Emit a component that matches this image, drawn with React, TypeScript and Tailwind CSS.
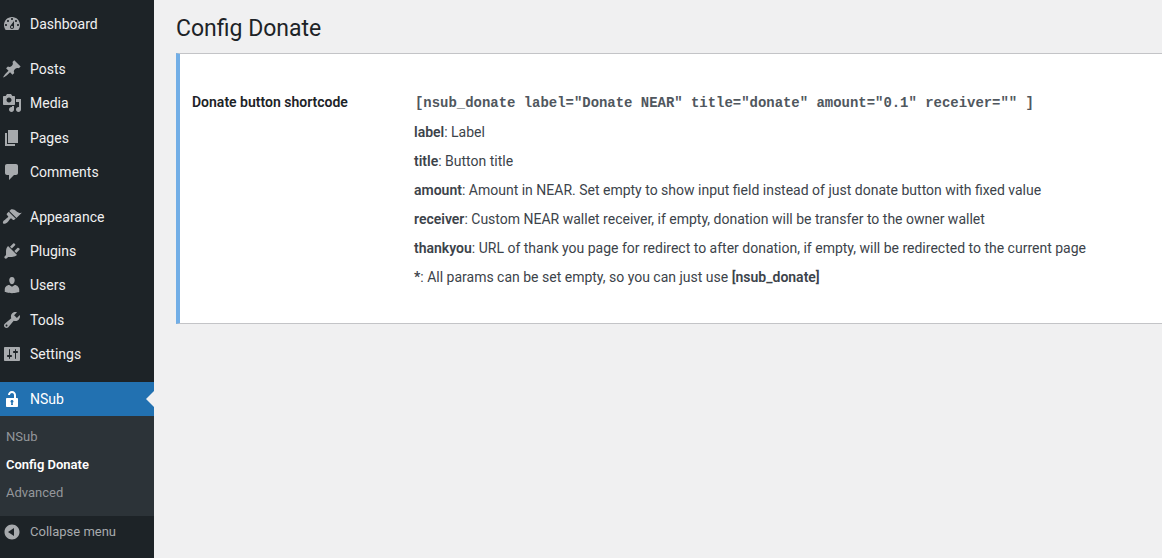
const icons: Record<string, string> = {
  dashboard:
    "M3.76 16h12.48c1.1-1.37 1.76-3.11 1.76-5 0-4.42-3.58-8-8-8s-8 3.58-8 8c0 1.89.66 3.63 1.76 5zM10 4c.55 0 1 .45 1 1s-.45 1-1 1-1-.45-1-1 .45-1 1-1zM6 6c.55 0 1 .45 1 1s-.45 1-1 1-1-.45-1-1 .45-1 1-1zm8 0c.55 0 1 .45 1 1s-.45 1-1 1-1-.45-1-1 .45-1 1-1zm-5.37 5.55L12 7v6c0 1.1-.9 2-2 2s-2-.9-2-2c0-.57.24-1.08.63-1.45zM4 10c.55 0 1 .45 1 1s-.45 1-1 1-1-.45-1-1 .45-1 1-1zm12 0c.55 0 1 .45 1 1s-.45 1-1 1-1-.45-1-1 .45-1 1-1zm-5 3c0-.55-.45-1-1-1s-1 .45-1 1 .45 1 1 1 1-.45 1-1z",
  posts:
    "M10.44 3.02l1.82-1.82 6.36 6.35-1.83 1.82c-1.05-.68-2.48-.57-3.41.36l-.75.75c-.92.93-1.04 2.35-.35 3.41l-1.83 1.82-2.41-2.41-2.8 2.79c-.42.42-3.38 2.71-3.8 2.29s1.86-3.39 2.28-3.81l2.79-2.79L4.1 9.36l1.83-1.82c1.05.69 2.48.57 3.4-.36l.75-.75c.93-.92 1.05-2.35.36-3.41z",
  media:
    "M13 11V4c0-.55-.45-1-1-1h-1.67L9 1H5L3.67 3H2c-.55 0-1 .45-1 1v7c0 .55.45 1 1 1h10c.55 0 1-.45 1-1zM7 4.5c1.38 0 2.5 1.12 2.5 2.5S8.38 9.5 7 9.5 4.5 8.38 4.5 7 5.62 4.5 7 4.5zM14 6h5v10.5c0 1.38-1.12 2.5-2.5 2.5S14 17.88 14 16.5s1.12-2.5 2.5-2.5c.17 0 .34.02.5.05V9h-3V6zm-4 8.05V13h2v3.5c0 1.38-1.12 2.5-2.5 2.5S7 17.88 7 16.5 8.12 14 9.5 14c.17 0 .34.02.5.05z",
  pages: "M6 15V2h10v13H6zm-1 1h8v2H3V5h2v11z",
  comments: "M5 2h9c1.1 0 2 .9 2 2v7c0 1.1-.9 2-2 2h-2l-5 5v-5H5c-1.1 0-2-.9-2-2V4c0-1.1.9-2 2-2z",
  appearance:
    "M14.48 11.06L7.41 3.99l1.5-1.5c.5-.56 2.3-.47 3.51.32 1.21.8 1.43 1.28 2.91 2.1 1.18.64 2.45 1.26 4.45.85zm-.71.71L6.7 4.7 4.93 6.47c-.39.39-.39 1.02 0 1.41l1.06 1.06c.39.39.39 1.03 0 1.42-.6.6-1.43 1.11-2.21 1.69-.35.26-.7.53-1.01.84C1.43 13.23.28 15.5 1.2 16.44c.97.97 3.21-.19 4.55-1.55.3-.3.57-.66.84-1.01.58-.78 1.09-1.61 1.69-2.21.39-.39 1.02-.39 1.41 0l1.06 1.06c.39.39 1.02.39 1.41 0z",
  plugins:
    "M13.11 4.36L9.87 7.6 8 5.73l3.24-3.24c.35-.34 1.05-.2 1.56.32.52.51.66 1.21.31 1.55zm-8 1.77l.91-1.12 9.01 9.01-1.19.84c-.71.71-2.63 1.16-3.82 1.16H6.14L4.9 17.26c-.59.59-1.54.59-2.12 0-.59-.58-.59-1.53 0-2.12l1.24-1.24v-3.88c0-1.13.4-3.19 1.09-3.89zm7.26 3.97l3.24-3.24c.34-.35 1.04-.21 1.55.31.52.51.66 1.21.31 1.55l-3.24 3.25z",
  users:
    "M10 9.25c-2.27 0-2.73-3.44-2.73-3.44C7 4.02 7.82 2 9.97 2c2.16 0 2.98 2.02 2.71 3.81 0 0-.41 3.44-2.68 3.44zm0 2.57L12.72 10c2.39 0 4.52 2.33 4.52 4.53v2.49s-3.65 1.13-7.24 1.13c-3.65 0-7.24-1.13-7.24-1.13v-2.49c0-2.25 1.94-4.48 4.47-4.48z",
  tools:
    "M16.68 9.77c-1.34 1.34-3.3 1.67-4.95.99l-5.41 6.52c-.99.99-2.59.99-3.58 0s-.99-2.59 0-3.57l6.52-5.42c-.68-1.65-.35-3.61.99-4.95 1.28-1.28 3.12-1.62 4.72-1.06l-2.89 2.89 2.82 2.82 2.86-2.87c.53 1.58.18 3.39-1.08 4.65zM3.81 16.21c.4.39 1.04.39 1.43 0 .4-.4.4-1.04 0-1.43-.39-.4-1.03-.4-1.43 0-.39.39-.39 1.03 0 1.43z",
  settings:
    "M18 16V4c0-.55-.45-1-1-1H3c-.55 0-1 .45-1 1v12c0 .55.45 1 1 1h14c.55 0 1-.45 1-1zM8 11h1c.55 0 1 .45 1 1s-.45 1-1 1H8v1.5c0 .28-.22.5-.5.5s-.5-.22-.5-.5V13H6c-.55 0-1-.45-1-1s.45-1 1-1h1V5.5c0-.28.22-.5.5-.5s.5.22.5.5V11zm5-2h-1c-.55 0-1-.45-1-1s.45-1 1-1h1V5.5c0-.28.22-.5.5-.5s.5.22.5.5V7h1c.55 0 1 .45 1 1s-.45 1-1 1h-1v5.5c0 .28-.22.5-.5.5s-.5-.22-.5-.5V9z",
  unlock:
    "M12 9V6c0-1.1-.9-2-2-2s-2 .9-2 2H6c0-2.21 1.79-4 4-4s4 1.79 4 4v3h1c.55 0 1 .45 1 1v7c0 .55-.45 1-1 1H5c-.55 0-1-.45-1-1v-7c0-.55.45-1 1-1h7zm-1 7l-.36-2.15c.51-.24.86-.75.86-1.35 0-.83-.67-1.5-1.5-1.5s-1.5.67-1.5 1.5c0 .6.35 1.11.86 1.35L9 16h2z",
  collapse:
    "M10 2.5c-4.14 0-7.5 3.36-7.5 7.5s3.36 7.5 7.5 7.5 7.5-3.36 7.5-7.5-3.36-7.5-7.5-7.5zm2 11.5l-6-4 6-4v8z",
};

function MenuIcon({ name, className }: { name: string; className: string }) {
  return (
    <svg viewBox="0 0 20 20" className={`h-5 w-5 shrink-0 fill-current ${className}`}>
      <path d={icons[name]} fillRule="evenodd" />
    </svg>
  );
}

function MenuItem({ icon, label }: { icon: string; label: string }) {
  return (
    <li className="flex h-[34.4px] items-center pl-[2px] text-[#f0f0f1]">
      <MenuIcon name={icon} className="text-[#a7aaad]" />
      <span className="ml-2">{label}</span>
    </li>
  );
}

export default function App() {
  return (
    <div className="flex h-[558px] w-[1162px] overflow-hidden bg-[#f0f0f1] font-['Roboto',sans-serif] text-sm text-[#3c434a]">
      <aside className="flex w-[154px] shrink-0 flex-col bg-[#1d2327] pt-[6.6px]">
        <ul>
          <MenuItem icon="dashboard" label="Dashboard" />
        </ul>
        <ul className="mt-[10.6px]">
          <MenuItem icon="posts" label="Posts" />
          <MenuItem icon="media" label="Media" />
          <MenuItem icon="pages" label="Pages" />
          <MenuItem icon="comments" label="Comments" />
        </ul>
        <ul className="mt-[10.3px]">
          <MenuItem icon="appearance" label="Appearance" />
          <MenuItem icon="plugins" label="Plugins" />
          <MenuItem icon="users" label="Users" />
          <MenuItem icon="tools" label="Tools" />
          <MenuItem icon="settings" label="Settings" />
        </ul>
        <div className="relative mt-[10.7px] flex h-[34px] items-center bg-[#2271b1] pl-[2px] text-white">
          <MenuIcon name="unlock" className="text-white" />
          <span className="ml-2">NSub</span>
          <span className="absolute right-0 top-[9px] border-y-[8px] border-r-[8px] border-y-transparent border-r-[#f0f0f1]" />
        </div>
        <ul className="bg-[#2c3338] pt-[7px] pb-[9px] text-[13px]">
          <li className="flex h-[28px] items-center pl-[6px] text-[#c3c4c7b3]">NSub</li>
          <li className="flex h-[28px] items-center pl-[6px] font-semibold text-white">Config Donate</li>
          <li className="flex h-[28px] items-center pl-[6px] text-[#c3c4c7b3]">Advanced</li>
        </ul>
        <div className="flex h-[32px] items-center pl-[2px] text-[13px] text-[#a7aaad]">
          <MenuIcon name="collapse" className="text-[#a7aaad]" />
          <span className="ml-2">Collapse menu</span>
        </div>
      </aside>

      <main className="min-w-0 flex-1 pl-[22px]">
        <h1 className="pt-[14px] text-[23px] leading-[29px] font-normal text-[#1d2327]">Config Donate</h1>
        <section className="mt-[10px] -mr-4 flex h-[271px] border border-l-4 border-[#c3c4c7] border-l-[#72aee6] bg-white pt-[39px]">
          <h2 className="-mt-px w-[234px] shrink-0 pl-3 font-semibold text-[#1d2327]">Donate button shortcode</h2>
          <div className="flex flex-col gap-[9px] leading-5">
            <code className="font-['Liberation_Mono',monospace] pl-px text-[13.95px] leading-5 font-bold text-[#50575e]">
              [nsub_donate label="Donate NEAR" title="donate" amount="0.1" receiver="" ]
            </code>
            <p><b className="font-semibold">label</b>: Label</p>
            <p><b className="font-semibold">title</b>: Button title</p>
            <p><b className="font-semibold">amount</b>: Amount in NEAR. Set empty to show input field instead of just donate button with fixed value</p>
            <p><b className="font-semibold">receiver</b>: Custom NEAR wallet receiver, if empty, donation will be transfer to the owner wallet</p>
            <p><b className="font-semibold">thankyou</b>: URL of thank you page for redirect to after donation, if empty, will be redirected to the current page</p>
            <p><b className="font-semibold">*</b>: All params can be set empty, so you can just use <b className="font-semibold">[nsub_donate]</b></p>
          </div>
        </section>
      </main>
    </div>
  );
}
